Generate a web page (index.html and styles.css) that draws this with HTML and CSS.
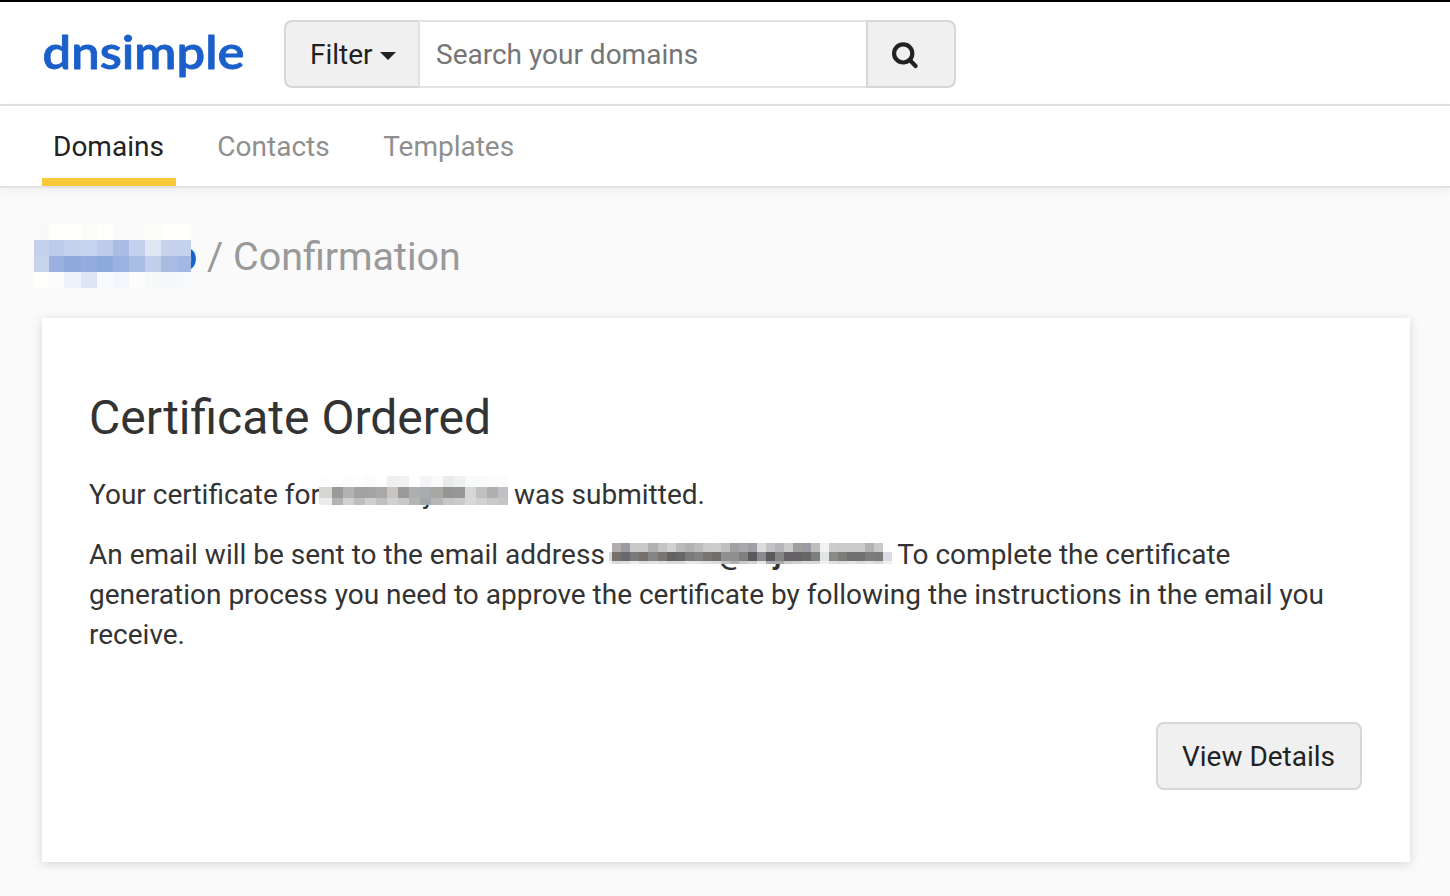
FILE: index.html
```
<!DOCTYPE html>
<html lang="en">
<head>
<meta charset="utf-8">
<title>Confirmation</title>
<link rel="stylesheet" href="styles.css">
</head>
<body>
<header class="topbar">
  <a class="brand"><svg class="logo" width="204" height="60" viewBox="0 0 204 60"><text class="logo-text" x="0.5" y="42" textLength="202" lengthAdjust="spacingAndGlyphs">dnsimple</text></svg></a>
  <div class="search">
    <button class="filter">Filter<span class="caret"></span></button>
    <input class="field" type="text" placeholder="Search your domains">
    <button class="go"><svg width="28" height="28" viewBox="0 0 28 28"><circle cx="13.2" cy="12.4" r="9.1" fill="none" stroke="#222" stroke-width="4.2"/><path d="M19.7 19L25.6 24.9" stroke="#222" stroke-width="4.2" stroke-linecap="round"/></svg></button>
  </div>
</header>
<nav class="tabs">
  <a class="tab active">Domains</a>
  <a class="tab">Contacts</a>
  <a class="tab">Templates</a>
</nav>
<main class="page">
  <div class="crumbs"><svg class="mask-domain" width="164" height="64" viewBox="0 0 164 64" shape-rendering="crispEdges"><text class="link" x="140.5" y="46">o</text><g id="m1"></g></svg><span class="crumb">/ Confirmation</span></div>
  <section class="card">
    <h1 class="title">Certificate Ordered</h1>
    <p class="line">Your certificate for<svg class="mask-host" width="189" height="36" viewBox="0 0 189 36" shape-rendering="crispEdges"><text class="ink" x="105" y="28">j</text><g id="m2"></g></svg> was submitted.</p>
    <p class="line">An email will be sent to the email address <svg class="mask-email" width="283" height="30" viewBox="0 0 283 30" shape-rendering="crispEdges"><text class="ink strong" x="110" y="22">@</text><text class="ink strong" x="165" y="22">j</text><g id="m3"></g></svg> To complete the certificate generation process you need to approve the certificate by following the instructions in the email you receive.</p>
    <div class="actions"><button class="details">View Details</button></div>
  </section>
</main>
<script src="mosaic.js"></script>
</body>
</html>
```
FILE: mosaic.js
```
// Fills a group with rows of solid cells, hiding private values.
function mosaic(id, xs, ys, rows) {
  var g = document.getElementById(id);
  rows.forEach(function (row, r) {
    row.split(' ').forEach(function (color, c) {
      var cell = document.createElementNS('http://www.w3.org/2000/svg', 'rect');
      cell.setAttribute('x', xs[c]);
      cell.setAttribute('y', ys[r]);
      cell.setAttribute('width', xs[c + 1] - xs[c]);
      cell.setAttribute('height', ys[r + 1] - ys[r]);
      cell.setAttribute('fill', '#' + color);
      g.appendChild(cell);
    });
  });
}

mosaic('m1', [0, 15, 30, 47, 63, 79, 95, 111, 127, 143, 157], [0, 16, 32, 48, 64], [
  'f9f9f9 fefefd fffffb fbfbf9 fefefd fafafa fafafb fbfbf9 fffffe fffffe',
  'c5d1ec bccbe9 c5d2ec c8d4ed becce9 a8bce4 c4d1ed e1e6f5 c7d3ed c4d2ed',
  'c8d3ec 9ab1e0 8eaadc 93acdd 8daadd 9bb2e1 a9bde5 c3cfea a8bce2 a0b8e3',
  'fefefc fcfcfc edf1fa dbe5f5 f9fafe f4f6fb fcfcfb f8f9fb f6f7fb f8f9fb'
]);

mosaic('m2', [0, 13, 24, 35, 46, 57, 68, 79, 90, 101, 112, 124, 135, 146, 157, 168, 179, 189], [1, 12, 23, 30], [
  'fcfefe ffffff fbfcfc fefefe fbfbfb fefefe f0efee f1f1ef fefefe f3f4f5 fafafa e9ebe9 edf2f0 f9fafa f9fafa fbfbfb fbfbfb',
  'd6d6d5 9a9a99 b1b3b4 a2a2a2 a3a3a4 a7a8aa c9c5c2 9a9a99 adaeb0 a9abb1 a9a7a4 959593 979797 d7d7d7 bfc0c1 afafaf bfc1c5',
  'ebebeb b3b3b3 d3d1cf bdbdbd d1cfcd c0c0c0 d2d1d0 c8c8c8 b5b4b3 a3a6aa b6b6b6 c6c6c8 cacac9 d9d9d9 d2d1cf c9c9c8 c4c5c7'
]);

mosaic('m3', [0, 3, 12, 21, 30, 39, 49, 58, 67, 76, 85, 94, 103, 112, 121, 130, 139, 148, 157, 166, 175, 184, 193, 202, 211, 220, 229, 238, 247, 256, 265, 274, 283], [1, 10, 19, 22], [
  'ffffff b1adad 9a9ba4 cacacb c9c9ca b0b0b3 c5c4c2 d2d2d2 bbbbbb b2b2b2 bcbcbe cbcbcc cdcdcd c0bfbf 9fa2a4 a9a9a9 9fa0a5 dcdcdd c2c2c3 b6b5b9 cbcbcc a29e9f 9a9ba3 bebebe f2f4f4 cccccc c9cbcb cacaca cacaca b2b3b0 c9c9cb fcfdfd',
  'dbdbdb 77706c 67696e 7a7a7a 77716d 858585 7a7472 636363 676766 7a7a7a 828282 777473 706e6d 8f9091 8f8f8e 7d7e80 5a5a5c 8b8b8d 5b5b5c 868485 636165 646264 676565 7d7d7d e1e5e4 8a8a89 7d7d7b 707271 727171 7b7d7d 7a7a7a dadce1',
  'f1f1f1 d9d9d9 dfdfdf ebebeb dededd e3e3e3 dfdfdf dadada d9d9da e8e8e8 e5e5e5 dfdfdf dededf c1c1c2 b0b1b2 c8c8c8 d3d3d4 e7e7e7 ababad aaaaaa cacaca d0d0d0 d9d9d9 d7d7d7 f0f1ef dedede dcdcdc e4e5e5 dbdbdb dfe0df d9d9d9 eff0f1'
]);
```
FILE: styles.css
```
* { box-sizing: border-box; }
body {
  margin: 0;
  height: 896px;
  overflow: hidden;
  background: #fafafa;
  color: #333;
  font: 28px/40px Roboto, "Liberation Sans", sans-serif;
}
button, input { font: inherit; }
svg { overflow: visible; }
.topbar {
  display: flex;
  align-items: flex-start;
  height: 106px;
  padding: 18px 42px 0;
  border-top: 2px solid #000;
  border-bottom: 2px solid #e2e2e2;
  background: #fff;
}
.brand { width: 242px; padding-top: 7px; }
.logo { display: block; }
.logo-text {
  font: 600 47px Lato, sans-serif;
  fill: #1a5fca;
  stroke: #1a5fca;
  stroke-width: .8px;
  stroke-linejoin: round;
}
.search { display: flex; width: 672px; height: 68px; }
.filter, .go, .details {
  padding: 0;
  border: 2px solid #d6d6d6;
  background: #f0f0f0;
  color: #222;
}
.filter {
  display: flex;
  align-items: center;
  width: 134px;
  padding: 2px 0 0 24px;
  border-right: 0;
  border-radius: 8px 0 0 8px;
}
.caret {
  margin: 2px 0 0 7px;
  border: 8px solid transparent;
  border-top-color: #222;
  border-bottom: 0;
}
.field {
  width: 448px;
  padding: 2px 16px 0;
  border: 2px solid #e2e2e2;
  border-right: 0;
  border-radius: 0;
  background: #fff;
}
.field::placeholder { color: #757575; opacity: 1; }
.go {
  width: 90px;
  padding: 2px 0 0 22px;
  border-radius: 0 8px 8px 0;
  text-align: left;
}
.go svg { display: block; }
.tabs {
  display: flex;
  gap: 30.5px;
  height: 82px;
  padding: 0 42px;
  border-bottom: 2px solid #e2e2e2;
  background: #fff;
  box-shadow: 0 2px 10px rgba(0, 0, 0, .06);
}
.tab { height: 80px; padding: 21px 12px 0 11px; color: #8f8f8f; }
.active { color: #222; border-bottom: 8px solid #f8c93a; }
.page { padding: 36px 40px 0 42px; }
.crumbs { display: flex; height: 94px; margin-left: -8px; }
.mask-domain { flex: none; }
.link { font: 500 40px Roboto, sans-serif; fill: #1a5fca; }
.crumb {
  padding: 1px 0 0 9px;
  font-size: 39.4px;
  line-height: 64px;
  color: #999;
}
.card {
  height: 544px;
  padding: 69px 48px 0 47px;
  background: #fff;
  box-shadow: 0 2px 10px rgba(0, 0, 0, .15);
}
.title { margin: 0; font-size: 48px; font-weight: 400; line-height: 62px; }
.line { margin: 0 0 20px; }
.title + .line { margin-top: 26px; }
.ink { font: 28px Roboto, sans-serif; fill: #333; }
.strong { font-weight: 700; }
.mask-host { margin: -4px -1px -4px -1px; vertical-align: -3px; }
.mask-email { margin: -4px -1px -4px -3px; vertical-align: -4px; }
.actions { display: flex; justify-content: flex-end; padding-top: 47px; }
.details { width: 206px; height: 68px; padding: 2px 1px 0 0; border-radius: 8px; }
```
